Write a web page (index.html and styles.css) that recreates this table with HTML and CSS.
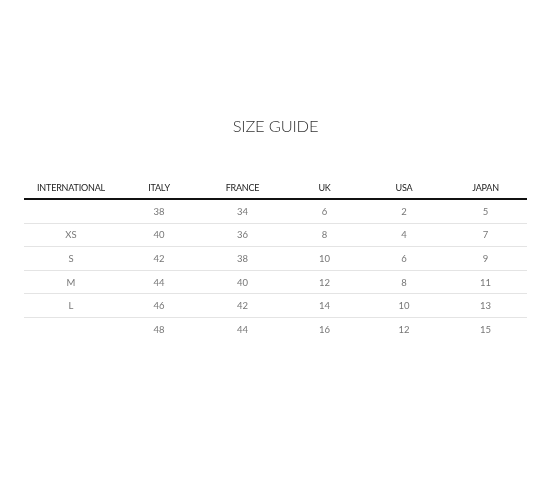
FILE: index.html
```html
<!DOCTYPE html>
<html>
<head>
<meta charset="utf-8">
<link rel="stylesheet" href="styles.css">
</head>
<body>
<div class="page">
  <h1 class="title">SIZE GUIDE</h1>
  <table class="sizes">
    <thead>
      <tr><th>INTERNATIONAL</th><th>ITALY</th><th>FRANCE</th><th>UK</th><th>USA</th><th>JAPAN</th></tr>
    </thead>
    <tbody>
      <tr><td></td><td>38</td><td>34</td><td>6</td><td>2</td><td>5</td></tr>
      <tr><td>XS</td><td>40</td><td>36</td><td>8</td><td>4</td><td>7</td></tr>
      <tr><td>S</td><td>42</td><td>38</td><td>10</td><td>6</td><td>9</td></tr>
      <tr><td>M</td><td>44</td><td>40</td><td>12</td><td>8</td><td>11</td></tr>
      <tr><td>L</td><td>46</td><td>42</td><td>14</td><td>10</td><td>13</td></tr>
      <tr><td></td><td>48</td><td>44</td><td>16</td><td>12</td><td>15</td></tr>
    </tbody>
  </table>
</div>
</body>
</html>
```

FILE: styles.css
```css
html, body {
  margin: 0;
  padding: 0;
  background: #fff;
}
.page {
  padding: 113px 23px 0 24px;
  font-family: Lato, "Open Sans", sans-serif;
  color: #333;
}
.title {
  margin: 0 0 37px;
  text-align: center;
  font-weight: 300;
  font-size: 16.5px;
  line-height: 26px;
  letter-spacing: -0.2px;
  color: #333;
  will-change: transform;
}
.sizes {
  width: 100%;
  border-collapse: collapse;
  table-layout: fixed;
  will-change: transform;
}
.sizes th {
  font-weight: 400;
  font-size: 9px;
  letter-spacing: -0.2px;
  color: #222;
  height: 22px;
  padding: 0;
  text-align: center;
  vertical-align: middle;
  border-bottom: 2px solid #111;
}
.sizes th:nth-child(1) { width: 94px; }
.sizes th:nth-child(2) { width: 82px; }
.sizes th:nth-child(3) { width: 85px; }
.sizes th:nth-child(4) { width: 79px; }
.sizes th:nth-child(5) { width: 80px; }
.sizes td {
  font-weight: 400;
  font-size: 9.5px;
  color: #777;
  height: 22.6px;
  padding: 0;
  text-align: center;
  vertical-align: middle;
  border-bottom: 1px solid #e4e4e4;
}
.sizes tbody tr:last-child td {
  border-bottom: none;
}
```
